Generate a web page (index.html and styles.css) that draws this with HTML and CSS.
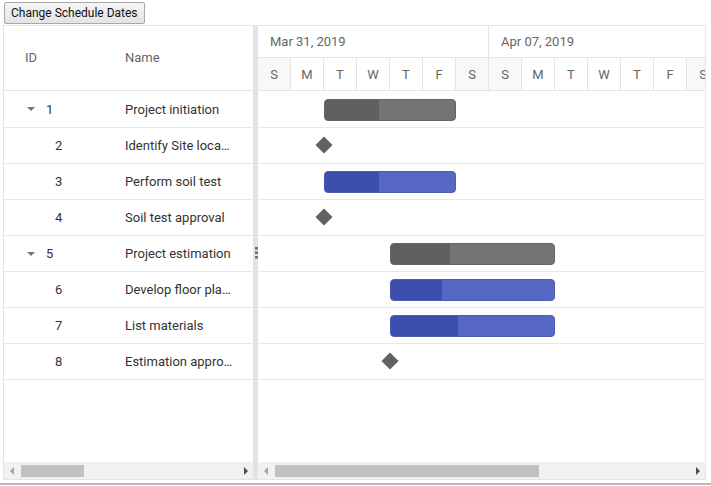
FILE: index.html
```html
<!DOCTYPE html>
<html>
<head>
<meta charset="utf-8">
<link rel="stylesheet" href="styles.css">
</head>
<body>
<div class="toolbar"><button class="btn">Change Schedule Dates</button></div>
<div class="gantt">
  <div class="grid-pane">
    <div class="grid-header">
      <div class="c-id">ID</div>
      <div class="c-name">Name</div>
    </div>
    <div class="grid-body">
      <div class="row"><div class="c-id parent"><span class="caret"></span>1</div><div class="c-name">Project initiation</div></div>
      <div class="row"><div class="c-id child">2</div><div class="c-name">Identify Site location</div></div>
      <div class="row"><div class="c-id child">3</div><div class="c-name">Perform soil test</div></div>
      <div class="row"><div class="c-id child">4</div><div class="c-name">Soil test approval</div></div>
      <div class="row"><div class="c-id parent"><span class="caret"></span>5</div><div class="c-name">Project estimation</div></div>
      <div class="row"><div class="c-id child">6</div><div class="c-name">Develop floor plan for estimation</div></div>
      <div class="row"><div class="c-id child">7</div><div class="c-name">List materials</div></div>
      <div class="row"><div class="c-id child">8</div><div class="c-name">Estimation approval</div></div>
    </div>
    <div class="scrollbar">
      <div class="sb-btn"><span class="arr-left"></span></div>
      <div class="sb-track"><div class="sb-thumb thumb-left"></div></div>
      <div class="sb-btn"><span class="arr-right"></span></div>
    </div>
  </div>
  <div class="splitter">
    <svg width="3" height="12" viewBox="0 0 3 12"><rect x="0" y="0" width="3" height="2.5" fill="#6b6b6b"/><rect x="0" y="4.5" width="3" height="2.5" fill="#6b6b6b"/><rect x="0" y="9" width="3" height="2.5" fill="#6b6b6b"/></svg>
  </div>
  <div class="chart-pane">
    <div class="tl-header">
      <div class="weeks">
        <div class="week">Mar 31, 2019</div>
        <div class="week">Apr 07, 2019</div>
      </div>
      <div class="days">
        <div class="day weekend">S</div><div class="day">M</div><div class="day">T</div><div class="day">W</div><div class="day">T</div><div class="day">F</div><div class="day weekend">S</div>
        <div class="day weekend">S</div><div class="day">M</div><div class="day">T</div><div class="day">W</div><div class="day">T</div><div class="day">F</div><div class="day weekend">S</div>
      </div>
    </div>
    <div class="chart-body">
      <div class="crow"><div class="bar bar-parent" style="left:66px;width:132px"><div class="progress" style="width:54px"></div></div></div>
      <div class="crow"><div class="milestone" style="left:60px"></div></div>
      <div class="crow"><div class="bar bar-child" style="left:66px;width:132px"><div class="progress" style="width:54px"></div></div></div>
      <div class="crow"><div class="milestone" style="left:60px"></div></div>
      <div class="crow"><div class="bar bar-parent" style="left:132px;width:165px"><div class="progress" style="width:59px"></div></div></div>
      <div class="crow"><div class="bar bar-child" style="left:132px;width:165px"><div class="progress" style="width:51px"></div></div></div>
      <div class="crow"><div class="bar bar-child" style="left:132px;width:165px"><div class="progress" style="width:67px"></div></div></div>
      <div class="crow"><div class="milestone" style="left:126px"></div></div>
    </div>
    <div class="scrollbar">
      <div class="sb-btn"><span class="arr-left"></span></div>
      <div class="sb-track"><div class="sb-thumb thumb-right"></div></div>
      <div class="sb-btn"><span class="arr-right"></span></div>
    </div>
  </div>
</div>
<div class="bottom-line"></div>
</body>
</html>
```
FILE: styles.css
```css
* { box-sizing: border-box; }
body {
  margin: 0;
  width: 711px;
  height: 486px;
  overflow: hidden;
  background: #fff;
  font-family: Roboto, "Noto Sans", sans-serif;
  font-size: 13px;
  color: #333;
}
.toolbar {
  height: 25px;
  padding: 2px 0 0 4px;
}
.btn {
  height: 22px;
  padding: 0 6px;
  font-family: Roboto, "Noto Sans", sans-serif;
  font-size: 12px;
  color: #111;
  background: linear-gradient(#f5f5f5, #e3e3e3);
  border: 1px solid #a8a8a8;
  border-radius: 2px;
}
.gantt {
  margin-left: 3px;
  width: 703px;
  height: 455px;
  border: 1px solid #e4e4e4;
  display: flex;
}
.grid-pane {
  width: 249px;
  display: flex;
  flex-direction: column;
}
.grid-header {
  height: 65px;
  border-bottom: 1px solid #e4e4e4;
  display: flex;
  align-items: center;
  color: #666;
  padding-bottom: 2px;
}
.grid-header .c-id { padding-left: 21px; }
.grid-body { flex: 1; }
.row {
  height: 36px;
  border-bottom: 1px solid #e8e8e8;
  display: flex;
  align-items: center;
}
.row:first-child { height: 37px; }
.c-id {
  width: 109px;
  flex-shrink: 0;
  display: flex;
  align-items: center;
}
.c-id.parent { padding-left: 23px; }
.c-id.child { padding-left: 51px; }
.caret {
  width: 0;
  height: 0;
  border-left: 4px solid transparent;
  border-right: 4px solid transparent;
  border-top: 4px solid #757575;
  margin-right: 11px;
}
.c-name {
  flex: 1;
  min-width: 0;
  padding-left: 12px;
  padding-right: 20px;
  white-space: nowrap;
  overflow: hidden;
  text-overflow: ellipsis;
}
.grid-header .c-name { overflow: visible; }
.splitter {
  width: 5px;
  background: #e3e3e3;
  display: flex;
  align-items: center;
  justify-content: center;
  padding-left: 1px;
}
.chart-pane {
  width: 447px;
  display: flex;
  flex-direction: column;
  overflow: hidden;
}
.tl-header {
  height: 65px;
  color: #666;
}
.weeks {
  display: flex;
  height: 32px;
  border-bottom: 1px solid #e4e4e4;
}
.week {
  width: 231px;
  flex-shrink: 0;
  border-right: 1px solid #e4e4e4;
  padding-left: 12px;
  display: flex;
  align-items: center;
}
.days {
  display: flex;
  height: 33px;
  border-bottom: 1px solid #e4e4e4;
}
.day {
  width: 33px;
  flex-shrink: 0;
  border-right: 1px solid #e4e4e4;
  display: flex;
  align-items: center;
  justify-content: center;
}
.day.weekend { background: #f8f8f8; }
.chart-body { flex: 1; }
.crow {
  height: 36px;
  border-bottom: 1px solid #e8e8e8;
  position: relative;
}
.crow:first-child { height: 37px; }
.bar {
  position: absolute;
  top: 7px;
  height: 22px;
  border-radius: 4px;
  overflow: hidden;
}
.crow:first-child .bar { top: 8px; }
.bar-parent { background: #747474; border: 1px solid #666; }
.bar-parent .progress { background: #5f5f5f; }
.bar-child { background: #5667c4; border: 1px solid #4a5bb8; }
.bar-child .progress { background: #3c4fae; }
.progress { height: 100%; }
.milestone {
  position: absolute;
  top: 11px;
  width: 12px;
  height: 12px;
  background: #616161;
  transform: rotate(45deg);
}
.scrollbar {
  height: 17px;
  background: #f1f1f1;
  display: flex;
  align-items: center;
  flex-shrink: 0;
}
.sb-btn {
  width: 15px;
  height: 17px;
  display: flex;
  align-items: center;
  justify-content: center;
}
.sb-track {
  flex: 1;
  height: 17px;
  display: flex;
  align-items: center;
}
.sb-thumb {
  height: 12px;
  background: #c1c1c1;
  margin-left: 2px;
}
.thumb-left { width: 63px; }
.thumb-right { width: 264px; }
.arr-left {
  width: 0;
  height: 0;
  border-top: 4px solid transparent;
  border-bottom: 4px solid transparent;
  border-right: 4px solid #a3a3a3;
}
.arr-right {
  width: 0;
  height: 0;
  border-top: 4px solid transparent;
  border-bottom: 4px solid transparent;
  border-left: 4px solid #505050;
}
.bottom-line {
  margin-top: 3px;
  height: 2px;
  background: #b8b8b8;
}
```
